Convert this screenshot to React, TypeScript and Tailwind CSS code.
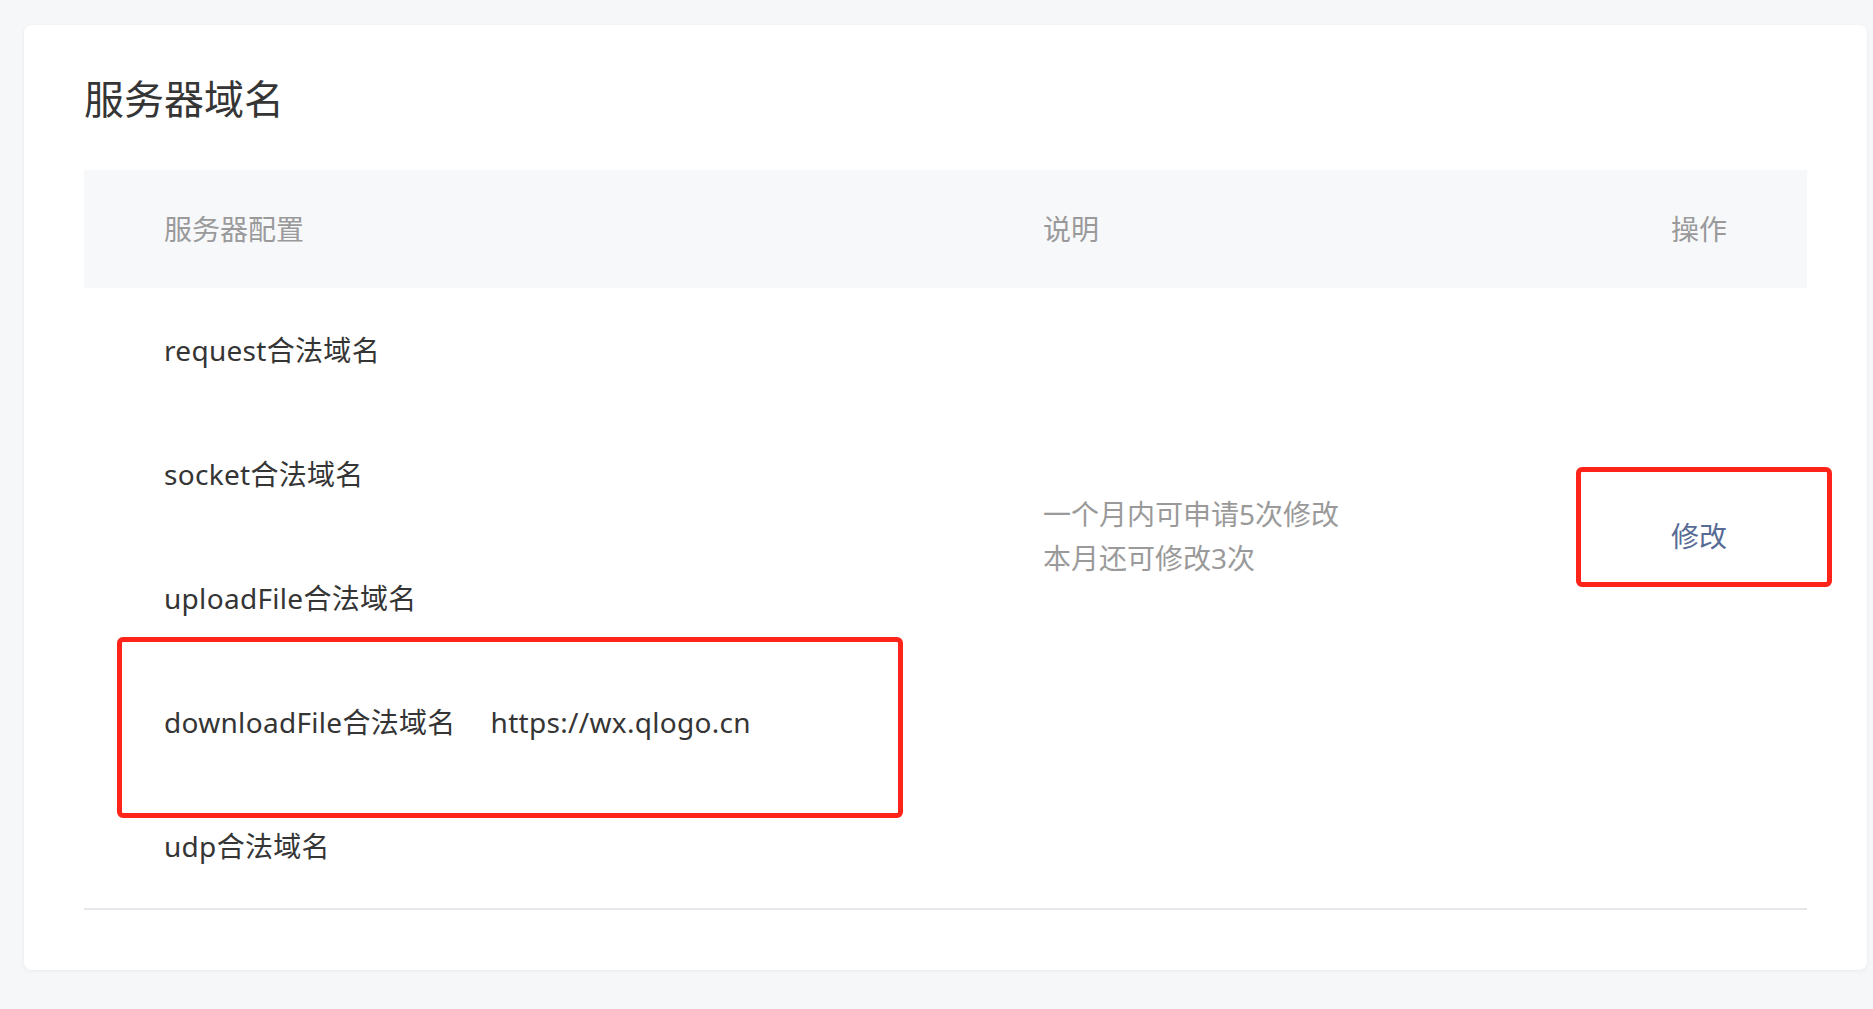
const rows = [
  { name: 'request合法域名' },
  { name: 'socket合法域名' },
  { name: 'uploadFile合法域名' },
  { name: 'downloadFile合法域名', value: 'https://wx.qlogo.cn' },
  { name: 'udp合法域名' },
];

export default function App() {
  return (
    <div className="min-h-[1009px] w-full bg-[#f6f7f9] pl-[24px] pr-[6px] pt-[25px] pb-[39px] font-['Noto_Sans','Noto_Sans_CJK_SC',sans-serif]">
      <div className="relative rounded-[8px] bg-white px-[60px] pt-[46px] pb-[60px] shadow-[0_1px_4px_rgba(0,0,0,0.06)]">
        <h1 className="text-[40px] leading-[56px] text-[#353535]">服务器域名</h1>

        <div className="mt-[43px]">
          <div className="grid h-[118px] grid-cols-[879px_1fr_auto] items-center bg-[#f7f8fa] px-[80px] text-[28px] text-[#9a9a9a]">
            <div>服务器配置</div>
            <div>说明</div>
            <div className="text-right">操作</div>
          </div>

          <div className="grid grid-cols-[879px_1fr_auto] grid-rows-[repeat(5,124px)] border-b-2 border-[#e7e7eb] px-[80px] text-[28px]">
            {rows.map((row, i) => (
              <div
                key={row.name}
                className="col-start-1 flex items-center gap-[35px] tracking-[0.3px] text-[#353535]"
                style={{ gridRowStart: i + 1 }}
              >
                <span>{row.name}</span>
                {row.value && <span>{row.value}</span>}
              </div>
            ))}
            <div className="col-start-2 row-start-1 row-span-4 self-center text-[#9a9a9a] leading-[44px]">
              <div>一个月内可申请5次修改</div>
              <div>本月还可修改3次</div>
            </div>
            <div className="col-start-3 row-start-1 row-span-4 self-center text-right">
              <a className="cursor-pointer text-[#576b95]">修改</a>
            </div>
          </div>
        </div>

        {/* annotation boxes */}
        <div className="pointer-events-none absolute left-[93px] top-[612px] h-[181px] w-[786px] rounded-[6px] border-[5px] border-[#ff2419]" />
        <div className="pointer-events-none absolute left-[1552px] top-[442px] h-[120px] w-[256px] rounded-[6px] border-[5px] border-[#ff2419]" />
      </div>
    </div>
  );
}
